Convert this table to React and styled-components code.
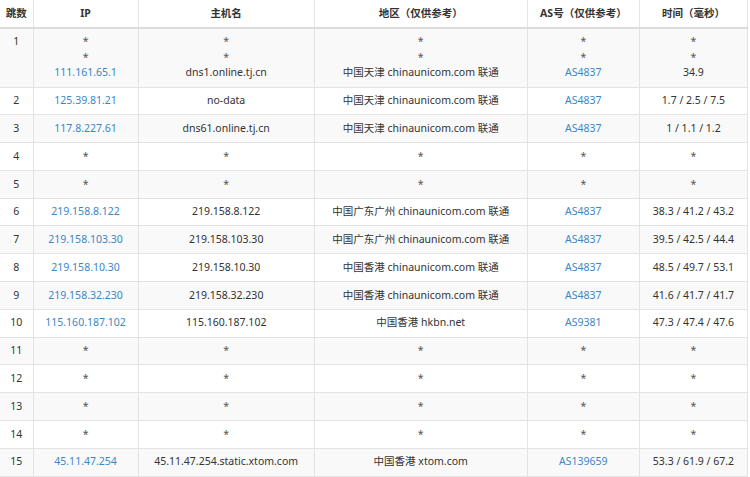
import React from 'react'
import styled, { createGlobalStyle } from "styled-components";

const GlobalStyle = createGlobalStyle`
  html, body {
    margin: 0;
    padding: 0;
    background: #fff;
  }
  body {
    font-family: "Noto Sans", "Noto Sans CJK SC", sans-serif;
    font-size: 10.5px;
    color: #333;
  }
`;

const STAR = { star: true };

const hops = [
  { no: 1, ip: [STAR, STAR, "111.161.65.1"], host: ["*", "*", "dns1.online.tj.cn"], region: ["*", "*", "中国天津 chinaunicom.com 联通"], as: [STAR, STAR, "AS4837"], time: ["*", "*", "34.9"] },
  { no: 2, ip: ["125.39.81.21"], host: ["no-data"], region: ["中国天津 chinaunicom.com 联通"], as: ["AS4837"], time: ["1.7 / 2.5 / 7.5"] },
  { no: 3, ip: ["117.8.227.61"], host: ["dns61.online.tj.cn"], region: ["中国天津 chinaunicom.com 联通"], as: ["AS4837"], time: ["1 / 1.1 / 1.2"] },
  { no: 4 },
  { no: 5 },
  { no: 6, ip: ["219.158.8.122"], host: ["219.158.8.122"], region: ["中国广东广州 chinaunicom.com 联通"], as: ["AS4837"], time: ["38.3 / 41.2 / 43.2"] },
  { no: 7, ip: ["219.158.103.30"], host: ["219.158.103.30"], region: ["中国广东广州 chinaunicom.com 联通"], as: ["AS4837"], time: ["39.5 / 42.5 / 44.4"] },
  { no: 8, ip: ["219.158.10.30"], host: ["219.158.10.30"], region: ["中国香港 chinaunicom.com 联通"], as: ["AS4837"], time: ["48.5 / 49.7 / 53.1"] },
  { no: 9, ip: ["219.158.32.230"], host: ["219.158.32.230"], region: ["中国香港 chinaunicom.com 联通"], as: ["AS4837"], time: ["41.6 / 41.7 / 41.7"] },
  { no: 10, ip: ["115.160.187.102"], host: ["115.160.187.102"], region: ["中国香港 hkbn.net"], as: ["AS9381"], time: ["47.3 / 47.4 / 47.6"] },
  { no: 11 },
  { no: 12 },
  { no: 13 },
  { no: 14 },
  { no: 15, ip: ["45.11.47.254"], host: ["45.11.47.254.static.xtom.com"], region: ["中国香港 xtom.com"], as: ["AS139659"], time: ["53.3 / 61.9 / 67.2"] },
];

const columns = [
  { title: "跳数", width: 33 },
  { title: "IP", width: 105 },
  { title: "主机名", width: 176 },
  { title: "地区（仅供参考）", width: 213 },
  { title: "AS号（仅供参考）", width: 112 },
  { title: "时间（毫秒）", width: 108 },
];

const Lines = ({ items, linked }) => (
  <>
    {(items || ["*"]).map((item, i) => {
      const isStar = item === "*" || (item && item.star);
      const text = isStar ? "*" : item;
      return (
        <Line key={i}>
          {isStar ? <Star>*</Star> : linked ? <LinkText>{text}</LinkText> : text}
        </Line>
      );
    })}
  </>
);

const App = () => {
  return (
    <Wrapper>
      <GlobalStyle />
      <Table>
        <colgroup>
          {columns.map((c) => (
            <col key={c.title} style={{ width: c.width }} />
          ))}
        </colgroup>
        <thead>
          <tr>
            {columns.map((c) => (
              <Th key={c.title}>{c.title}</Th>
            ))}
          </tr>
        </thead>
        <tbody>
          {hops.map((hop, idx) => (
            <Row key={hop.no} $striped={idx % 2 === 0}>
              <Td>{hop.no}</Td>
              <Td><Lines items={hop.ip} linked /></Td>
              <Td><Lines items={hop.host} /></Td>
              <Td><Lines items={hop.region} /></Td>
              <Td><Lines items={hop.as} linked /></Td>
              <Td><Lines items={hop.time} /></Td>
            </Row>
          ))}
        </tbody>
      </Table>
    </Wrapper>
  );
};

const Wrapper = styled.div`
  width: 750px;
  overflow: hidden;
`;

const Table = styled.table`
  width: 748px;
  table-layout: fixed;
  border-collapse: collapse;
  border-spacing: 0;
  border-right: 1px solid #e3e3e3;
`;

const Th = styled.th`
  padding: 5.5px 0;
  line-height: 15.6px;
  font-weight: bold;
  text-align: center;
  color: #333;
  white-space: nowrap;
  border-left: 1px solid #e3e3e3;
  border-bottom: 2px solid #dcdcdc;

  &:first-child {
    border-left: none;
  }
`;

const Row = styled.tr`
  background: ${props => props.$striped ? '#f9f9f9' : '#fff'};
`;

const Td = styled.td`
  padding: 5.6px 0;
  line-height: 15.6px;
  text-align: center;
  vertical-align: top;
  white-space: nowrap;
  border-left: 1px solid #e3e3e3;
  border-bottom: 1px solid #e3e3e3;
  color: #333;

  &:first-child {
    border-left: none;
  }
`;

const Line = styled.div`
  height: 15.6px;
`;

const Star = styled.span`
  color: #555;
`;

const LinkText = styled.span`
  color: #3a87c8;
`;

export default App;
